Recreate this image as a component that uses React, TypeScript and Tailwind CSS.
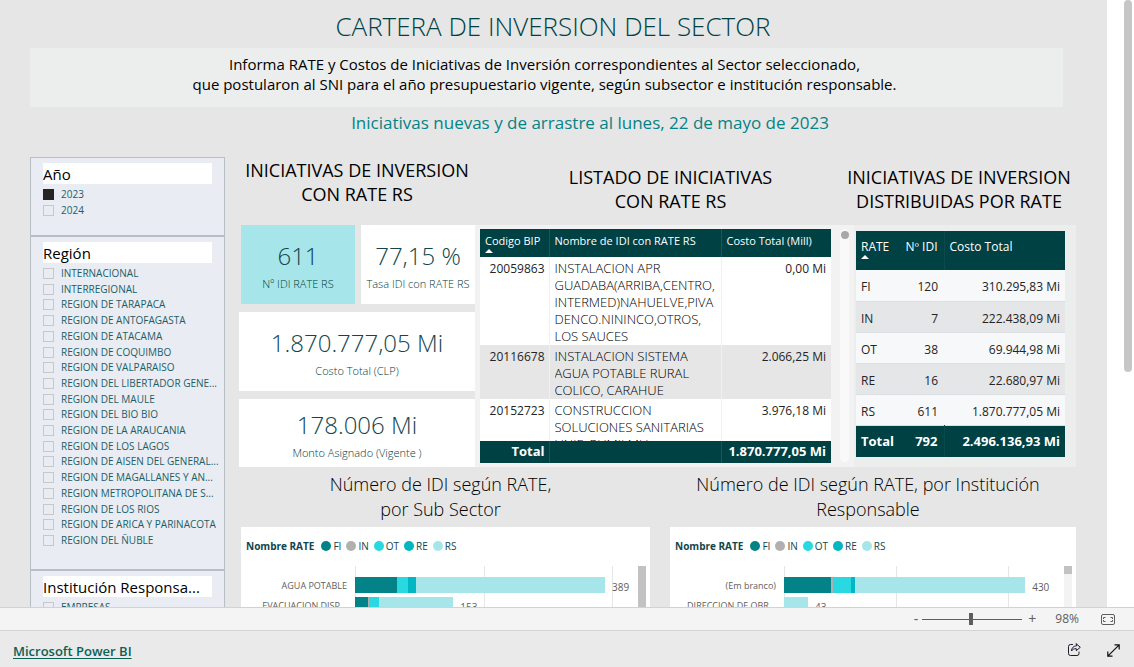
import React from "react";
import clsx from "clsx";

type Segment = { rate: string; value: number };
type Bar = { label: string; total: number; segments: Segment[] };

const regions = [
  "INTERNACIONAL",
  "INTERREGIONAL",
  "REGION DE TARAPACA",
  "REGION DE ANTOFAGASTA",
  "REGION DE ATACAMA",
  "REGION DE COQUIMBO",
  "REGION DE VALPARAISO",
  "REGION DEL LIBERTADOR GENE...",
  "REGION DEL MAULE",
  "REGION DEL BIO BIO",
  "REGION DE LA ARAUCANIA",
  "REGION DE LOS LAGOS",
  "REGION DE AISEN DEL GENERAL...",
  "REGION DE MAGALLANES Y AN...",
  "REGION METROPOLITANA DE S...",
  "REGION DE LOS RIOS",
  "REGION DE ARICA Y PARINACOTA",
  "REGION DEL ÑUBLE",
];

const initiatives = [
  {
    code: "20059863",
    name: ["INSTALACION APR", "GUADABA(ARRIBA,CENTRO,", "INTERMED)NAHUELVE,PIVA", "DENCO.NININCO,OTROS,", "LOS SAUCES"],
    cost: "0,00 Mi",
  },
  {
    code: "20116678",
    name: ["INSTALACION SISTEMA", "AGUA POTABLE RURAL", "COLICO, CARAHUE"],
    cost: "2.066,25 Mi",
  },
  {
    code: "20152723",
    name: ["CONSTRUCCION", "SOLUCIONES SANITARIAS", "UNIF. RUMILMU"],
    cost: "3.976,18 Mi",
  },
];

const rates = [
  { rate: "FI", count: "120", cost: "310.295,83 Mi" },
  { rate: "IN", count: "7", cost: "222.438,09 Mi" },
  { rate: "OT", count: "38", cost: "69.944,98 Mi" },
  { rate: "RE", count: "16", cost: "22.680,97 Mi" },
  { rate: "RS", count: "611", cost: "1.870.777,05 Mi" },
];

const rateColors: { [key: string]: string } = {
  FI: "bg-[#038387]",
  IN: "bg-[#b0b0b0]",
  OT: "bg-[#2ad8e2]",
  RE: "bg-[#00b7c3]",
  RS: "bg-[#a6e6ea]",
};

const subSectorBars: Bar[] = [
  {
    label: "AGUA POTABLE",
    total: 389,
    segments: [
      { rate: "FI", value: 66 },
      { rate: "OT", value: 17 },
      { rate: "RE", value: 12 },
      { rate: "RS", value: 294 },
    ],
  },
  {
    label: "EVACUACION DISP...",
    total: 153,
    segments: [
      { rate: "FI", value: 20 },
      { rate: "IN", value: 2 },
      { rate: "OT", value: 15 },
      { rate: "RS", value: 116 },
    ],
  },
];

const institutionBars: Bar[] = [
  {
    label: "(Em branco)",
    total: 430,
    segments: [
      { rate: "FI", value: 84 },
      { rate: "IN", value: 3 },
      { rate: "OT", value: 33 },
      { rate: "RE", value: 6 },
      { rate: "RS", value: 304 },
    ],
  },
  {
    label: "DIRECCION DE OBR...",
    total: 43,
    segments: [{ rate: "RS", value: 43 }],
  },
];

const CheckItem = ({ label, checked }: { label: string; checked?: boolean }) => (
  <li className="h-[15px]">
    <label className="flex h-full items-center gap-[7px] whitespace-nowrap text-[10px] leading-[15px] text-[#1b5e68]">
      <input
        type="checkbox"
        defaultChecked={checked}
        className="size-[11px] shrink-0 appearance-none border border-[#c8c8c8] checked:border-[#252423] checked:bg-[#252423]"
      />
      {label}
    </label>
  </li>
);

const SlicerTitle = ({ children }: { children: React.ReactNode }) => (
  <h3 className="mr-3 h-[21px] bg-white text-[15px] leading-[22px] text-black">{children}</h3>
);

const Card = ({ value, label, className }: { value: string; label: string; className?: string }) => (
  <div className={clsx("flex flex-col items-center justify-center pt-[7px] text-[#12464c]", className)}>
    <p className="text-2xl leading-8 font-light">{value}</p>
    <p className="text-[11px] leading-6 font-light text-[#003c40]">{label}</p>
  </div>
);

const Heading = ({ children }: { children: React.ReactNode }) => (
  <h2 className="text-center text-lg leading-6 text-black">{children}</h2>
);

const SortArrow = () => (
  <svg className="h-1 w-2" viewBox="0 0 8 4" aria-hidden="true">
    <path d="M0 4 4 0l4 4z" fill="#fff" />
  </svg>
);

const InitiativesTable = () => (
  <table className="w-full table-fixed border-collapse text-xs text-[#252423]">
    <colgroup>
      <col className="w-[69px]" />
      <col />
      <col className="w-[110px]" />
    </colgroup>
    <thead className="bg-[#004144] text-[11px] leading-4 text-white">
      <tr className="h-7 align-top">
        <th className="border-r border-[#1d5558] pt-1 pl-[5px] text-left font-normal whitespace-nowrap">
          Codigo BIP
          <div className="flex h-1"><SortArrow /></div>
        </th>
        <th className="border-r border-[#1d5558] pt-1 pl-[5px] text-left font-normal">Nombre de IDI con RATE RS</th>
        <th className="pt-1 pl-[5px] text-left font-normal">Costo Total (Mill)</th>
      </tr>
    </thead>
    <tbody>
      {initiatives.map((item, index) => (
        <tr key={item.code} className={clsx("align-top leading-[17px]", index % 2 ? "bg-[#e6e6e6]" : "bg-white")}>
          <td className="border-r border-[#f0f0f0] pt-[3px] pr-1 text-right">{item.code}</td>
          <td className="border-r border-[#f0f0f0] pt-[3px] pl-[5px] text-[13px] font-light text-black">
            <div className={clsx("overflow-hidden whitespace-nowrap", index === 2 && "h-[39px]")}>
              {item.name.map((line) => (
                <div key={line}>{line}</div>
              ))}
            </div>
          </td>
          <td className="pt-[3px] pr-[5px] text-right">{item.cost}</td>
        </tr>
      ))}
    </tbody>
    <tfoot className="bg-[#004144] text-[13px] font-bold text-white">
      <tr className="h-[22px]">
        <td className="border-r border-[#1d5558] pr-1 text-right">Total</td>
        <td className="border-r border-[#1d5558]" />
        <td className="pr-[5px] text-right whitespace-nowrap">1.870.777,05 Mi</td>
      </tr>
    </tfoot>
  </table>
);

const RateTable = () => (
  <table className="w-full table-fixed border-collapse text-xs text-[#252423]">
    <colgroup>
      <col className="w-[42px]" />
      <col className="w-[46px]" />
      <col />
    </colgroup>
    <thead className="bg-[#004144] text-white">
      <tr className="h-[39px] align-top">
        <th className="pt-2 pl-[5px] text-left font-normal">
          RATE
          <div className="flex h-1"><SortArrow /></div>
        </th>
        <th className="border-r border-[#0c4a4d] pt-2 pr-[6px] text-right font-normal whitespace-nowrap">Nº IDI</th>
        <th className="pt-2 pl-[5px] text-left font-normal">Costo Total</th>
      </tr>
    </thead>
    <tbody>
      {rates.map((item, index) => (
        <tr
          key={item.rate}
          className={clsx("h-[31px] border-b border-[#dcdfe1]", index % 2 ? "bg-[#e4e6e8]" : "bg-[#f6f8fa]")}
        >
          <td className="pt-1 pl-[5px]">{item.rate}</td>
          <td className="pt-1 pr-[6px] text-right">{item.count}</td>
          <td className="pt-1 pr-[5px] text-right">{item.cost}</td>
        </tr>
      ))}
    </tbody>
    <tfoot className="bg-[#004144] text-[13px] font-bold text-white">
      <tr className="h-8">
        <td className="pl-[5px]">Total</td>
        <td className="border-r border-[#0c4a4d] pr-[6px] text-right">792</td>
        <td className="pr-[5px] text-right whitespace-nowrap">2.496.136,93 Mi</td>
      </tr>
    </tfoot>
  </table>
);

const BarChart = ({ bars, max, thumb }: { bars: Bar[]; max: number; thumb: string }) => (
  <div className="h-[140px] bg-white pt-[11px] pl-[5px]">
    <div className="flex h-4 items-center gap-[5px] text-[10px] text-[#12464c]">
      <span className="mr-[2px] font-bold">Nombre RATE</span>
      {Object.keys(rateColors).map((rate) => (
        <span key={rate} className="flex items-center gap-[2px]">
          <span className={clsx("size-[10px] rounded-full", rateColors[rate])} />
          {rate}
        </span>
      ))}
    </div>
    <div className="mt-3 flex h-[100px] pr-1">
      <div className="flex w-[101px] flex-col gap-1 pt-3 text-right text-[9px] leading-4 text-[#605e5c]">
        {bars.map((bar) => (
          <span key={bar.label}>{bar.label}</span>
        ))}
      </div>
      <div className="relative ml-2 flex flex-1 flex-col gap-1 pt-[11px]">
        {[0, 200, 400].map((tick) => (
          <span
            key={tick}
            className="absolute inset-y-0 w-px bg-[#e6e6e6]"
            style={{ left: `${(tick / max) * 100}%` }}
          />
        ))}
        {bars.map((bar) => (
          <div key={bar.label} className="relative flex h-4">
            {bar.segments.map((segment) => (
              <span
                key={segment.rate}
                className={rateColors[segment.rate]}
                style={{ width: `${(segment.value / max) * 100}%` }}
              />
            ))}
            <span className="ml-[7px] pt-[2px] text-[10px] leading-4 text-[#605e5c]">{bar.total}</span>
          </div>
        ))}
      </div>
      <div className="ml-1 w-2 bg-[#f3f3f3]">
        <div className={clsx("bg-[#c2c2c2]", thumb)} />
      </div>
    </div>
  </div>
);

const App = () => {
  return (
    <div className="flex h-screen flex-col overflow-hidden bg-white font-['Open_Sans','Noto_Sans',sans-serif]">
      <main className="flex min-h-0 flex-1">
        <div className="flex-1 overflow-hidden bg-[#e6e6e6] pr-[31px] pl-[30px]">
          <h1 className="h-12 pt-[10px] text-center text-[26px] leading-8 font-light text-[#004144]">
            CARTERA DE INVERSION DEL SECTOR
          </h1>
          <div className="mr-[13px] h-[59px] bg-[#eceeed] pt-[6px] pr-1 text-center text-[15px] leading-5 text-black">
            Informa RATE y Costos de Iniciativas de Inversión correspondientes al Sector seleccionado,
            <br />
            que postularon al SNI para el año presupuestario vigente, según subsector e institución responsable.
          </div>
          <p className="h-[50px] pt-1 pl-[74px] text-center text-[17px] leading-6 text-[#038387]">
            Iniciativas nuevas y de arrastre al lunes, 22 de mayo de 2023
          </p>

          <div className="flex gap-[14px]">
            <aside className="w-[195px] shrink-0">
              <section className="h-[79px] border border-[#b8bec5] bg-[#e9ecf2] pt-[5px] pl-3">
                <SlicerTitle>Año</SlicerTitle>
                <ul className="mt-[3px] flex flex-col gap-px">
                  <CheckItem label="2023" checked />
                  <CheckItem label="2024" />
                </ul>
              </section>
              <section className="h-[334px] border border-[#b8bec5] bg-[#e9ecf2] pt-[5px] pl-3">
                <SlicerTitle>Región</SlicerTitle>
                <ul className="mt-[3px] flex h-[282px] flex-col justify-between">
                  {regions.map((region) => (
                    <CheckItem key={region} label={region} />
                  ))}
                </ul>
              </section>
              <section className="h-[120px] border border-[#b8bec5] bg-[#e9ecf2] pt-[5px] pl-3">
                <SlicerTitle>Institución Responsa...</SlicerTitle>
                <ul className="mt-[3px]">
                  <CheckItem label="EMPRESAS" />
                </ul>
              </section>
            </aside>

            <div className="min-w-0 flex-1">
              <div className="grid grid-cols-[236fr_379fr_222fr]">
                <div className="h-[68px] pt-px">
                  <Heading>INICIATIVAS DE INVERSION<br />CON RATE RS</Heading>
                </div>
                <div className="h-[68px] pt-2 pl-3">
                  <Heading>LISTADO DE INICIATIVAS<br />CON RATE RS</Heading>
                </div>
                <div className="-ml-3 h-[68px] pt-2">
                  <Heading>INICIATIVAS DE INVERSION<br />DISTRIBUIDAS POR RATE</Heading>
                </div>

                <div className="flex flex-col gap-2">
                  <div className="flex gap-[6px] pl-[2px]">
                    <Card value="611" label="Nº IDI RATE RS" className="h-[79px] flex-1 bg-[#a6e6ea]" />
                    <Card value="77,15 %" label="Tasa IDI con RATE RS" className="h-[79px] flex-1 bg-white" />
                  </div>
                  <Card value="1.870.777,05 Mi" label="Costo Total (CLP)" className="h-[79px] bg-white" />
                  <Card value="178.006 Mi" label="Monto Asignado (Vigente )" className="h-[68px] bg-white" />
                </div>
                <div className="flex gap-[9px] bg-[#f2f2f2] pt-1 pr-[5px] pl-[5px]">
                  <div className="flex-1">
                    <InitiativesTable />
                  </div>
                  <div className="mb-[5px] w-[9px] rounded-full bg-[#f9f9f9] pt-[2px]">
                    <div className="mx-auto size-2 rounded-full bg-[#a8a8a8]" />
                  </div>
                </div>
                <div className="bg-[#eceeed] pt-[6px] pr-[11px] pl-[2px]">
                  <RateTable />
                </div>
              </div>

              <div className="mt-[5px] flex gap-5 pl-[2px] text-center">
                <section className="flex-[409]">
                  <h2 className="h-[55px] pr-[10px] text-lg leading-[25px] font-light text-black">
                    Número de IDI según RATE,
                    <br />
                    por Sub Sector
                  </h2>
                  <BarChart bars={subSectorBars} max={434} thumb="h-full" />
                </section>
                <section className="flex-[406]">
                  <h2 className="h-[55px] pr-[10px] text-lg leading-[25px] font-light text-black">
                    Número de IDI según RATE, por Institución
                    <br />
                    Responsable
                  </h2>
                  <BarChart bars={institutionBars} max={492} thumb="h-2" />
                </section>
              </div>
            </div>
          </div>
        </div>
        <div className="w-[27px] shrink-0 pl-[17px]">
          <div className="h-[372px] w-2 rounded-full bg-[#c6c6c6]" />
        </div>
      </main>

      <div className="flex h-6 shrink-0 items-center justify-end border-y border-[#d2d2d2] bg-[#f4f4f4] pr-[19px] text-[#605e5c]">
        <button className="text-sm leading-5" aria-label="Alejar">-</button>
        <input
          type="range"
          min={0}
          max={100}
          defaultValue={49}
          aria-label="Zoom"
          className="mr-[6px] ml-1 h-3 w-[100px] appearance-none bg-[linear-gradient(#605e5c,#605e5c)] bg-[length:100%_1px] bg-center bg-no-repeat [&::-webkit-slider-thumb]:h-3 [&::-webkit-slider-thumb]:w-1 [&::-webkit-slider-thumb]:appearance-none [&::-webkit-slider-thumb]:bg-[#605e5c]"
        />
        <button className="text-sm leading-5" aria-label="Acercar">+</button>
        <span className="ml-[19px] text-xs">98%</span>
        <button className="ml-[22px]" aria-label="Ajustar a la página">
          <svg width="14" height="11" viewBox="0 0 14 11" fill="none" stroke="#605e5c">
            <rect x="0.5" y="0.5" width="13" height="10" rx="1.5" />
            <path d="M4.5 3.5h-2v1.5M2.5 6v1.5h2M9.5 3.5h2v1.5M11.5 6v1.5h-2" />
          </svg>
        </button>
      </div>
      <footer className="flex h-9 shrink-0 items-center bg-[#eaeaea] pr-[14px] pl-[13px]">
        <a href="#" className="pt-[5px] text-[13px] font-semibold text-[#0b6156] underline underline-offset-2">Microsoft Power BI</a>
        <button className="mt-px ml-auto" aria-label="Compartir">
          <svg width="13" height="13" viewBox="0 0 13 13" fill="none" stroke="#1b1a2b" strokeLinejoin="round" strokeLinecap="round">
            <path d="M4.5 1.5h-2A2 2 0 0 0 .5 3.5v7a2 2 0 0 0 2 2h6.500a2 2 0 0 0 2-2V9" />
            <path d="M8.300.8 12.300 4.300 8.300 7.700V5.700C6 5.500 4.500 6.400 3.500 8c.1-3 1.800-5 4.800-5.200z" />
          </svg>
        </button>
        <button className="mt-[2px] ml-[26px]" aria-label="Pantalla completa">
          <svg width="13" height="13" viewBox="0 0 13 13" fill="none" stroke="#111">
            <path d="M7.500.8h4.700v4.700M.8 7.500v4.700h4.700M12.200.8.8 12.200" strokeWidth="1.200" />
          </svg>
        </button>
      </footer>
    </div>
  );
};

export default App;
